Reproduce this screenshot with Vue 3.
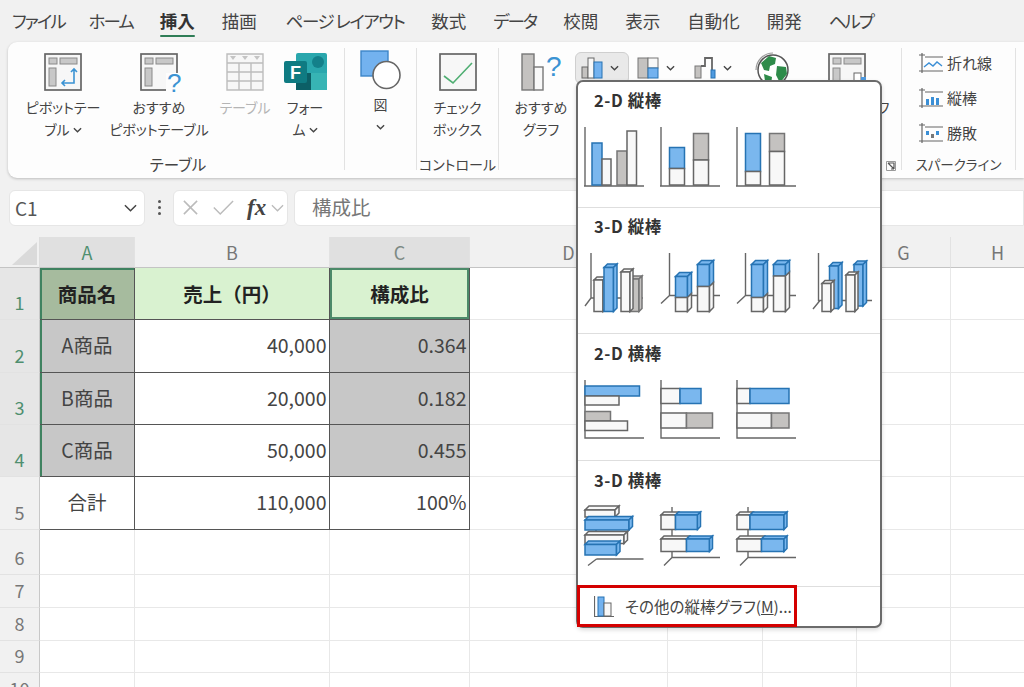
<script setup>
const tabs = [
  { t: 'ファイル', c: 'kana tight-after' }, { t: 'ホーム', c: 'kana' }, { t: '挿入', c: 'active' }, { t: '描画', c: 'wide-after' },
  { t: 'ページ レイアウト', c: 'kana-long' }, { t: '数式', c: '' }, { t: 'データ', c: 'kana' }, { t: '校閲', c: '' },
  { t: '表示', c: '' }, { t: '自動化', c: '' }, { t: '開発', c: '' }, { t: 'ヘルプ', c: 'kana' }
]

const box = (c, x, y, w, h) => [c, `M${x} ${y}h${w}v${h}h${-w}z`]
const line = d => ['ax', d]

// upright 3-D column made of stacked segments, top to bottom
const col = (x, w, d, segs) => {
  const out = [[segs[0][0], `M${x} ${segs[0][1]}l${d} ${-d}h${w}l${-d} ${d}z`]]
  segs.forEach(([c, y0, y1]) => {
    out.push(box(c, x, y0, w, y1 - y0))
    out.push([c, `M${x + w} ${y0}l${d} ${-d}V${y1 - d}l${-d} ${d}z`])
  })
  return out
}

// lying 3-D bar made of segments, left to right
const bar = (y, h, d, segs) => {
  const out = []
  segs.forEach(([c, x0, x1]) => {
    out.push([c, `M${x0} ${y}l${d} ${-d}H${x1 + d}l${-d} ${d}z`])
    out.push(box(c, x0, y, x1 - x0, h))
  })
  const [c, , x1] = segs[segs.length - 1]
  out.push([c, `M${x1} ${y}l${d} ${-d}v${h}l${-d} ${d}z`])
  return out
}

const axis2d = line('M1 0V59M0 59H60')
const axisBar = line('M1 0V58H60')
const axis3dV = line('M9.5 0V42.5H60M1 50.5L9.5 42.5')
const axis3dH = line('M12 0V50.5H60M4 58.5L12 50.5')

const sections = [
  {
    title: '2-D 縦棒', cls: '',
    icons: [
      [axis2d, box('bl', 8, 16, 10, 42), box('wh', 18, 32, 9, 26), box('gr', 33, 24, 10, 34), box('wh', 43, 4, 9.5, 54)],
      [axis2d, box('bl', 9.5, 20.5, 15, 21), box('wh', 9.5, 41.5, 15, 16.5), box('gr', 33.5, 6.5, 15, 26.5), box('wh', 33.5, 33, 15, 25)],
      [axis2d, box('bl', 9.5, 6.5, 15, 38), box('wh', 9.5, 44.5, 15, 13.5), box('gr', 33.5, 6.5, 15, 18), box('wh', 33.5, 24.5, 15, 33.5)]
    ]
  },
  {
    title: '3-D 縦棒', cls: '',
    icons: [
      [line('M7 0V45H59M1 53L7 45'), ...col(10, 9, 3, [['wh', 27, 58.5]]), ...col(20, 9.5, 3.5, [['bl', 14.5, 58.5]]), ...col(46, 9, 3, [['gr', 26, 58.5]]), ...col(37, 9, 3, [['wh', 19, 58.5]])],
      [axis3dV, ...col(15.5, 12, 4, [['bl', 23.5, 44.5], ['wh', 44.5, 58.5]]), ...col(37.5, 12, 4, [['bl', 11.5, 33.5], ['wh', 33.5, 58.5]])],
      [axis3dV, ...col(15.5, 12, 4, [['bl', 11.5, 44.5], ['wh', 44.5, 58.5]]), ...col(37.5, 12, 4, [['bl', 11.5, 23], ['wh', 23, 58.5]])],
      [line('M6.5 0V47.5H60M1 56L8 47.5'), ...col(17.5, 9, 3.5, [['bl', 13, 55.5]]), ...col(42, 9, 3.5, [['bl', 11.5, 53]]), ...col(10, 9, 3, [['wh', 30.5, 58.5]]), ...col(34, 9, 3, [['wh', 22, 58.5]])]
    ]
  },
  {
    title: '2-D 横棒', cls: 'low tall',
    icons: [
      [axisBar, box('bl', 1, 6, 54.5, 10), box('wh', 1, 16, 34, 9), box('gr', 1, 31.5, 25.5, 9.5), box('wh', 1, 41, 42.5, 9.5)],
      [axisBar, box('wh', 1, 8.5, 19, 15), box('bl', 20, 8.5, 21, 15), box('wh', 1, 33, 25.5, 15), box('gr', 26.5, 33, 26, 15)],
      [axisBar, box('wh', 1, 8.5, 13, 15), box('bl', 14, 8.5, 39, 15), box('wh', 1, 33, 34.5, 15), box('gr', 35.5, 33, 17.5, 15)]
    ]
  },
  {
    title: '3-D 横棒', cls: 'low',
    icons: [
      [line('M12 0V2M12.5 52H59.5M4 58.5L12.5 52M12 23V28'), ...bar(3, 7, 4, [['wh', 1, 31]]), ...bar(13, 10, 3.5, [['bl', 1, 45]]), ...bar(28, 8.5, 3.5, [['wh', 1, 40]]), ...bar(37.5, 10.5, 3.5, [['bl', 1, 32.5]])],
      [axis3dH, ...bar(8, 14.5, 3, [['wh', 1, 15.5], ['bl', 15.5, 37.5]]), ...bar(32, 12.5, 3, [['wh', 1, 26.5], ['bl', 26.5, 49.5]])],
      [axis3dH, ...bar(8, 14.5, 3, [['wh', 1, 14], ['bl', 14, 48]]), ...bar(32, 12.5, 3, [['wh', 1, 25.5], ['bl', 25.5, 48]])]
    ]
  }
]

const spark = [
  { label: '折れ線', kind: 'line' },
  { label: '縦棒', kind: 'col' },
  { label: '勝敗', kind: 'win' }
]

const columns = [
  { name: 'A', sel: true }, { name: 'B' }, { name: 'C', sel: true },
  { name: 'D' }, { name: '' }, { name: '' }, { name: 'G' }, { name: 'H' }
]

const rows = [
  { n: 1, sel: true, cells: [['商品名', 'c head a1'], ['売上（円）', 'c head tb'], ['構成比', 'c head tb c1']] },
  { n: 2, sel: true, cells: [['A商品', 'c mark tb first-sel'], ['40,000', 'r tb'], ['0.364', 'r mark tb']] },
  { n: 3, sel: true, cells: [['B商品', 'c mark tb first-sel'], ['20,000', 'r tb'], ['0.182', 'r mark tb']] },
  { n: 4, sel: true, cells: [['C商品', 'c mark tb first-sel'], ['50,000', 'r tb'], ['0.455', 'r mark tb']] },
  { n: 5, cells: [['合計', 'c tb'], ['110,000', 'r tb'], ['100%', 'r tb']] },
  { n: 6, cells: [] }, { n: 7, cells: [] }, { n: 8, cells: [] }, { n: 9, cells: [] }, { n: 10, cells: [] }
]

const cellsOf = row => {
  const out = [...row.cells]
  while (out.length < 8) out.push(['', ''])
  return out
}
</script>

<template>
  <div class="app">
    <nav class="tabs">
      <span v-for="t in tabs" :key="t.t" class="tab" :class="t.c">{{ t.t }}</span>
    </nav>

    <section class="ribbon">
      <div class="group g-table">
        <div class="items">
          <div class="item w82">
            <svg class="ic" viewBox="0 0 38 38"><rect x="1" y="1" width="36" height="36" class="frame" /><rect x="5" y="5" width="8" height="6" class="cell-g" /><rect x="16" y="5" width="17" height="6" class="cell-g" /><rect x="5" y="15" width="7" height="18" class="cell-g" /><path class="arrow" d="M30 16V30H18M27 19l3-3 3 3M21 27l-3 3 3 3" /></svg>
            <div class="label">ピボットテー<br />ブル <svg class="chev" viewBox="0 0 10 6"><path d="M1 1l4 4 4-4" /></svg></div>
          </div>
          <div class="item w110">
            <svg class="ic" viewBox="0 0 38 38"><rect x="1" y="1" width="36" height="36" class="frame" /><rect x="5" y="5" width="8" height="6" class="cell-g" /><rect x="16" y="5" width="17" height="6" class="cell-g" /><rect x="5" y="15" width="7" height="18" class="cell-g" /><rect x="26" y="20" width="14" height="20" class="blank" /><text x="27" y="39" class="qm">?</text></svg>
            <div class="label">おすすめ<br />ピボットテーブル</div>
          </div>
          <div class="item w62">
            <svg class="ic" viewBox="0 0 38 38"><path class="tbl" d="M1 1h36v36H1zM1 10h36M1 19h36M1 28h36M13 10v27M25 10v27" /><path class="tri" d="M4 3h6l-3 4zM16 3h6l-3 4zM28 3h6l-3 4z" /></svg>
            <div class="label off">テーブル</div>
          </div>
          <div class="item w58">
            <svg class="ic forms" viewBox="0 0 43 38"><rect x="12" y="0" width="31" height="37" rx="2" fill="#2aa7ad" /><circle cx="34" cy="9" r="6" fill="#14808a" /><rect x="27" y="20" width="16" height="17" fill="#37b4b4" /><rect x="12" y="20" width="15" height="17" fill="#0c5f66" /><rect x="0" y="8" width="23" height="22" rx="2" fill="#0f7b82" /><text x="6" y="25.5" class="f">F</text></svg>
            <div class="label">フォー<br />ム <svg class="chev" viewBox="0 0 10 6"><path d="M1 1l4 4 4-4" /></svg></div>
          </div>
        </div>
        <div class="group-label big">テーブル</div>
      </div>

      <div class="group g-shape">
        <div class="items">
          <div class="item full shape-item">
            <svg class="ic" viewBox="0 0 40 38"><rect x="1" y="1" width="27" height="25" fill="#73b2ef" stroke="#3d85c8" stroke-width="1.4" /><circle cx="26.5" cy="25" r="13.5" fill="#fff" stroke="#666" stroke-width="1.6" /></svg>
            <div class="label">図<br /><svg class="chev" viewBox="0 0 10 6"><path d="M1 1l4 4 4-4" /></svg></div>
          </div>
        </div>
      </div>

      <div class="group g-ctrl">
        <div class="items">
          <div class="item full">
            <svg class="ic" viewBox="0 0 38 38"><rect x="1" y="1" width="36" height="36" class="frame" /><path d="M5 23l9 7L33 10" fill="none" stroke="#4fae72" stroke-width="1.6" /></svg>
            <div class="label">チェック<br />ボックス</div>
          </div>
        </div>
        <div class="group-label">コントロール</div>
      </div>

      <div class="group g-chart">
        <div class="items">
          <div class="item rec">
            <svg class="ic rec-ic" viewBox="0 0 40 38"><rect x="1" y="1" width="12" height="36" fill="#c4c2c0" stroke="#777" stroke-width="1.4" /><rect x="13" y="14" width="9" height="23" fill="#f8f8f8" stroke="#777" stroke-width="1.4" /><text x="25" y="23" class="qm small">?</text></svg>
            <div class="label">おすすめ<br />グラフ</div>
          </div>
          <div class="mini-row">
            <div class="mini hot">
              <svg class="mini-ic" viewBox="0 0 22 22"><rect x="1" y="10" width="6" height="11" fill="#c4c2c0" stroke="#666" /><rect x="7" y="1" width="6" height="20" fill="#f8f8f8" stroke="#666" /><rect x="13" y="5" width="8" height="16" fill="#73b2ef" stroke="#2673b3" /></svg>
              <svg class="chev" viewBox="0 0 10 6"><path d="M1 1l4 4 4-4" /></svg>
            </div>
            <div class="mini m2">
              <svg class="mini-ic" viewBox="0 0 22 22"><rect x="1" y="1" width="10" height="20" fill="#c4c2c0" stroke="#777" /><rect x="11" y="1" width="10" height="10" fill="#f8f8f8" stroke="#777" /><rect x="11" y="11" width="10" height="10" fill="#73b2ef" stroke="#2673b3" /></svg>
              <svg class="chev" viewBox="0 0 10 6"><path d="M1 1l4 4 4-4" /></svg>
            </div>
            <div class="mini m3">
              <svg class="mini-ic" viewBox="0 0 22 22"><rect x="1" y="9" width="6" height="12" fill="#c4c2c0" stroke="#777" /><path d="M7 9h4V1h7v12" fill="none" stroke="#666" stroke-width="1.8" /><rect x="17" y="13" width="4" height="8" fill="#4e9ae0" stroke="#2673b3" /></svg>
              <svg class="chev" viewBox="0 0 10 6"><path d="M1 1l4 4 4-4" /></svg>
            </div>
          </div>
          <div class="item globe">
            <svg class="ic" viewBox="0 0 38 38"><circle cx="19" cy="17" r="15" fill="#fff" stroke="#555" stroke-width="1.5" /><path d="M2 17A17 17 0 0 1 19 0" fill="none" stroke="#999" stroke-width="1.2" /><path d="M7 10l8-7 7 2-1 6-5 2-1 5-5-1zM23 13l9 1 1 7-7 9-4-8zM10 21l8 3-1 8-6-4z" fill="#2e8b4a" /></svg>
            <div class="label">マップ</div>
          </div>
          <div class="item pchart">
            <svg class="ic" viewBox="0 0 38 38"><rect x="1" y="1" width="36" height="36" class="frame" /><rect x="5" y="5" width="8" height="6" class="cell-g" /><rect x="16" y="5" width="17" height="6" class="cell-g" /><rect x="5" y="15" width="7" height="18" class="cell-g" /><rect x="26" y="20" width="7" height="12" fill="#fff" stroke="#666" /><rect x="33" y="24" width="5" height="8" fill="#4e9ae0" /></svg>
            <div class="label nowrap">ピボットグラフ</div>
          </div>
          <svg class="launcher" viewBox="0 0 12 12"><path d="M1.5 1.5h9v9h-9z" fill="none" stroke="#999" /><path d="M3 3h6v6M3 3l6 6M6 9h3" fill="none" stroke="#555" stroke-width="1.2" /></svg>
        </div>
        <div class="group-label">グラフ</div>
      </div>

      <div class="group g-spark">
        <div class="spark-list">
          <div v-for="s in spark" :key="s.kind" class="spark">
            <svg class="spark-ic" viewBox="0 0 24 22">
              <path d="M3 1v20M0 3h6M0 19h24M6 5h18" fill="none" stroke="#666" stroke-width="1.2" />
              <path v-if="s.kind === 'line'" d="M5 15l5-4 4 3 4-4 5 4" fill="none" stroke="#3b8fd6" stroke-width="1.4" />
              <path v-if="s.kind === 'col'" d="M7 12h3v6H7zM12 10h3v8h-3zM17 11h3v7h-3z" fill="#3b8fd6" />
              <path v-if="s.kind === 'win'" d="M7 9h3v4H7zM17 9h3v4h-3z" fill="#3b8fd6" />
              <path v-if="s.kind === 'win'" d="M12 12h3v4h-3z" fill="#777" />
            </svg>
            <span>{{ s.label }}</span>
          </div>
        </div>
        <div class="group-label narrow">スパークライン</div>
      </div>
    </section>

    <div class="formula">
      <div class="box name">
        <span>C1</span>
        <svg class="fchev" viewBox="0 0 14 8"><path d="M1 1l6 6 6-6" /></svg>
      </div>
      <div class="dots"><i></i><i></i><i></i></div>
      <div class="box fx-box">
        <svg class="fx-ic" viewBox="0 0 18 18"><path d="M2 2l14 14M16 2L2 16" /></svg>
        <svg class="fx-ic check" viewBox="0 0 24 18"><path d="M2 9l7 7L23 2" /></svg>
        <span class="fx">fx</span>
        <svg class="fx-chev" viewBox="0 0 14 8"><path d="M1 1l6 6 6-6" /></svg>
      </div>
      <div class="box input">構成比</div>
    </div>

    <div class="sheet">
      <div class="corner"><i></i></div>
      <div v-for="(c, i) in columns" :key="'h' + i" class="col-head" :class="{ sel: c.sel, green: c.name === 'A' }">{{ c.name }}</div>
      <template v-for="row in rows" :key="row.n">
        <div class="row-head" :class="{ sel: row.sel }">{{ row.n }}</div>
        <div v-for="(cell, j) in cellsOf(row)" :key="j" class="cell" :class="cell[1]">{{ cell[0] }}</div>
      </template>
    </div>

    <aside class="menu">
      <div v-for="s in sections" :key="s.title" class="menu-sec" :class="s.cls">
        <h3>{{ s.title }}</h3>
        <div class="chart-row">
          <svg v-for="(ic, i) in s.icons" :key="i" class="chart" viewBox="0 0 60 60">
            <path v-for="(p, j) in ic" :key="j" :class="p[0]" :d="p[1]" />
          </svg>
        </div>
      </div>
      <div class="more">
        <svg class="more-ic" viewBox="0 0 20 21"><path d="M.5 0v20.5H20" fill="none" stroke="#666" stroke-width="1.2" /><rect x="4" y="1" width="6" height="19" fill="#73b2ef" stroke="#2673b3" /><rect x="10" y="7" width="7" height="13" fill="#f8f8f8" stroke="#666" /></svg>
        <span>その他の縦棒グラフ(<u>M</u>)...</span>
      </div>
    </aside>
  </div>
</template>

<style scoped>
.app {
  position: relative;
  width: 1024px;
  height: 687px;
  overflow: hidden;
  background: #f1f1f1;
  color: #444;
  font-family: "Noto Sans CJK JP", "Noto Sans", sans-serif;
}

.tabs {
  display: flex;
  align-items: center;
  gap: 27px;
  height: 42px;
  padding-left: 12px;
  box-sizing: border-box;
  font-size: 17.5px;
  font-feature-settings: "palt";
  color: #444;
  white-space: nowrap;
}
.tab { position: relative; line-height: 42px; }
.kana { letter-spacing: -2px; }
.kana-long { letter-spacing: -1.5px; }
.tight-after { margin-right: -3px; }
.wide-after { margin-right: 2px; }
.tab.active { font-weight: 700; color: #333; }
.tab.active::after {
  content: "";
  position: absolute;
  left: 0;
  right: 0;
  bottom: 5px;
  height: 2.5px;
  background: #2f7d57;
  border-radius: 2px;
}

.ribbon {
  display: flex;
  height: 136px;
  margin-left: 8px;
  padding: 6px 0 4px;
  box-sizing: border-box;
  background: #fdfdfd;
  border-radius: 9px 0 0 9px;
  box-shadow: 0 1px 3px rgba(0, 0, 0, .22);
  font-size: 14px;
  font-feature-settings: "palt";
  white-space: nowrap;
}
.group {
  display: flex;
  flex-direction: column;
  flex: none;
  height: 122px;
  box-sizing: border-box;
  border-right: 1px solid #e2e2e2;
}
.g-table { width: 337px; padding-left: 14px; }
.g-shape { width: 72px; }
.g-ctrl { width: 82px; }
.g-chart { width: 403px; padding-left: 8px; }
.g-spark { width: 114px; }

.items {
  display: flex;
  flex: none;
  height: 102px;
  padding-top: 5px;
  box-sizing: border-box;
}
.group-label {
  flex: none;
  height: 20px;
  margin-top: 4px;
  line-height: 20px;
  text-align: center;
  font-size: 14px;
  color: #444;
}
.group-label.big { padding-right: 10px; font-size: 15.5px; }
.group-label.narrow { font-size: 13.5px; }
.g-chart .group-label { padding-right: 8px; }

.item {
  display: flex;
  flex-direction: column;
  align-items: center;
  flex: none;
}
.w82 { width: 82px; }
.w110 { width: 110px; }
.w62 { width: 62px; }
.w58 { width: 58px; }
.full { width: 100%; }
.rec { width: 68px; }
.globe { width: 70px; margin-left: 1px; }
.pchart { width: 78px; }
.shape-item .ic { margin-top: -3px; width: 40px; margin-left: -2px; }

.ic { width: 38px; height: 38px; overflow: visible; flex: none; }
.forms { width: 43px; }
.rec-ic { width: 40px; }
.label {
  margin-top: 5px;
  line-height: 22px;
  text-align: center;
  color: #444;
}
.off { color: #b5b5b5; }
.chev {
  display: inline-block;
  width: 9px;
  height: 6px;
  vertical-align: 2px;
  fill: none;
  stroke: #444;
  stroke-width: 1.5;
}

.frame { fill: #f7f7f7; stroke: #666; stroke-width: 1.7; }
.cell-g { fill: #c8c8c8; stroke: #8a8a8a; stroke-width: 1; }
.blank { fill: #fdfdfd; }
.arrow { fill: none; stroke: #3b93d3; stroke-width: 1.6; }
.qm { font-family: "Liberation Sans", sans-serif; font-size: 26px; fill: #3b93d3; }
.qm.small { font-size: 28px; }
.tbl { fill: #f7f7f7; stroke: #bdbdbd; stroke-width: 1.4; }
.tri { fill: #c4c4c4; }
.f { font-family: "Liberation Sans", sans-serif; font-size: 18px; font-weight: 700; fill: #fff; }

.mini-row { display: flex; align-items: flex-start; margin-top: -1px; flex: none; }
.mini {
  display: flex;
  align-items: center;
  gap: 7px;
  height: 32px;
  padding-left: 1px;
  box-sizing: border-box;
}
.mini.hot {
  width: 54px;
  margin-right: 7px;
  padding-left: 5px;
  background: #e9e9e9;
  border: 1px solid #cfcfcf;
  border-radius: 6px;
}
.m2 { width: 57px; }
.m3 { width: 44px; }
.mini-ic { width: 22px; height: 22px; flex: none; }

.launcher { width: 12px; height: 12px; flex: none; margin-top: 107px; margin-left: -1px; }
.nowrap { white-space: nowrap; }

.spark-list {
  display: flex;
  flex: none;
  flex-direction: column;
  height: 105px;
  margin-top: -3px;
  padding-left: 17px;
  box-sizing: border-box;
}
.spark {
  display: flex;
  align-items: center;
  gap: 4px;
  height: 35px;
  flex: none;
  font-size: 15px;
  color: #444;
}
.spark-ic { width: 24px; height: 22px; flex: none; }

.formula {
  display: flex;
  align-items: center;
  height: 37px;
  margin-top: 11px;
  padding-left: 9px;
}
.box {
  display: flex;
  align-items: center;
  height: 36px;
  box-sizing: border-box;
  background: #fff;
  border: 1px solid #e6e6e6;
  border-radius: 6px;
}
.name {
  justify-content: space-between;
  width: 136px;
  padding: 0 7px 0 5px;
  font-size: 19px;
  color: #555;
}
.fchev { width: 13px; height: 8px; fill: none; stroke: #444; stroke-width: 1.6; }
.dots {
  display: flex;
  flex-direction: column;
  align-items: center;
  gap: 3px;
  width: 28px;
}
.dots i { width: 3px; height: 3px; background: #555; border-radius: 50%; }
.fx-box { width: 115px; padding-left: 8px; }
.fx-ic { width: 17px; height: 17px; fill: none; stroke: #bbb; stroke-width: 1.6; flex: none; }
.fx-ic.check { width: 22px; margin-left: 13px; }
.fx {
  margin-left: 13px;
  font-family: "Liberation Serif", serif;
  font-style: italic;
  font-weight: 700;
  font-size: 23px;
  line-height: 1;
  color: #444;
}
.fx-chev { width: 13px; height: 8px; margin-left: 5px; fill: none; stroke: #bbb; stroke-width: 1.4; }
.input {
  flex: 1;
  margin-left: 6px;
  padding: 0 0 3px 17px;
  border-radius: 6px 0 0 6px;
  font-size: 19.5px;
  color: #777;
}

.sheet {
  display: grid;
  grid-template-columns: 40px 95px 195px 140px 198px 95px 94px 94px 94px;
  grid-template-rows: 31px 52px 53px 52px 52px 53px 45px 33px 33px 32px 33px;
  margin-top: 11px;
  font-size: 19.5px;
  color: #444;
  background: #fff;
}
.corner {
  position: relative;
  background: #f1f1f1;
  border-right: 1px solid #ddd;
  border-bottom: 1px solid #c4c4c4;
  box-sizing: border-box;
}
.corner i {
  position: absolute;
  left: 12px;
  top: 5px;
  width: 25px;
  height: 23px;
  background: #dadada;
  clip-path: polygon(100% 0, 100% 100%, 0 100%);
}
.col-head {
  display: flex;
  align-items: center;
  justify-content: center;
  box-sizing: border-box;
  background: #f1f1f1;
  border-right: 1px solid #e2e2e2;
  border-bottom: 1px solid #c4c4c4;
  font-size: 18px;
  color: #777;
}
.col-head.sel { background: #e0e0e0; color: #7d8a84; }
.col-head.green { color: #4f8f6f; }
.row-head {
  display: flex;
  align-items: flex-end;
  justify-content: center;
  padding-bottom: 4px;
  box-sizing: border-box;
  background: #f1f1f1;
  border-right: 1px solid #c8c8c8;
  border-bottom: 1px solid #e2e2e2;
  font-size: 18px;
  line-height: 26px;
  color: #777;
}
.row-head.sel { background: #e6e6e6; color: #4f8f6f; }

.cell {
  display: flex;
  align-items: center;
  box-sizing: border-box;
  min-width: 0;
  padding-bottom: 3px;
  border-right: 1px solid #e8e8e8;
  border-bottom: 1px solid #e8e8e8;
  background: #fff;
}
.c { justify-content: center; }
.r { justify-content: flex-end; padding-right: 2.5px; }
.tb { border-right: 1.5px solid #555; border-bottom: 1.5px solid #555; }
.head { padding-bottom: 1px; background: #d9f2d0; font-weight: 700; color: #222; }
.mark { background: #c7c7c7; }
.a1 {
  background: #a6bb9e;
  border-right: 1.5px solid #555;
  border-bottom: 1.5px solid #555;
  box-shadow: inset 2px 2px 0 #3f8260;
}
.first-sel { box-shadow: inset 2px 0 0 #3f8260; }
.c1 { box-shadow: inset 0 0 0 2px #4c8a69; }

.menu {
  position: absolute;
  left: 576px;
  top: 80px;
  width: 306px;
  height: 548px;
  box-sizing: border-box;
  background: #fff;
  border: 2px solid #6b6b6b;
  border-radius: 7px;
  box-shadow: 0 2px 4px rgba(0, 0, 0, .15);
}
.menu-sec {
  height: 126px;
  box-sizing: border-box;
  padding: 8px 0 0 6px;
  border-bottom: 1px solid #dedede;
}
.menu-sec.low { padding-top: 9px; }
.menu-sec.tall { height: 127px; }
.menu-sec h3 {
  margin: 0 0 17px 10px;
  font-size: 16.5px;
  font-weight: 700;
  line-height: 20px;
  letter-spacing: .6px;
  color: #333;
}
.chart-row { display: flex; gap: 16px; }
.chart { width: 60px; height: 60px; flex: none; overflow: visible; }
.bl { fill: #7ab7ee; stroke: #2673b3; stroke-width: 1.5; }
.gr { fill: #c4c2c0; stroke: #757575; stroke-width: 1.5; }
.wh { fill: #f8f8f8; stroke: #666; stroke-width: 1.5; }
.ax { fill: none; stroke: #666; stroke-width: 1.4; }

.more {
  display: flex;
  align-items: center;
  gap: 11px;
  width: 220px;
  height: 42px;
  margin: -2px 0 0 -1px;
  padding-left: 14px;
  box-sizing: border-box;
  border: 3px solid #d40000;
  font-size: 15.5px;
  font-feature-settings: "palt";
  color: #444;
  white-space: nowrap;
}
.more-ic { width: 20px; height: 21px; flex: none; }
</style>
